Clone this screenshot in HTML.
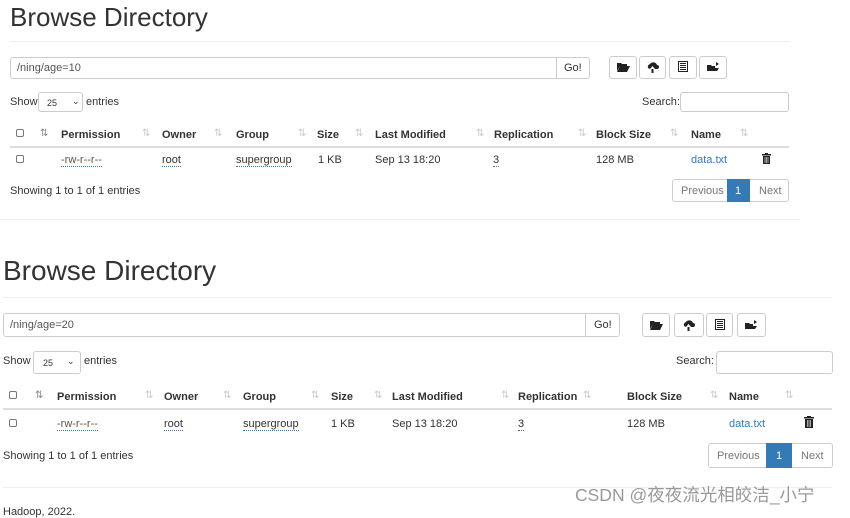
<!DOCTYPE html>
<html><head><meta charset="utf-8"><style>
*{margin:0;padding:0;box-sizing:border-box}
body{width:850px;height:516px;overflow:hidden;background:#fff;font-family:"Liberation Sans",sans-serif;color:#333;position:relative}
.a{position:absolute;white-space:nowrap}
.t{font-size:11px;line-height:12px}
.b{font-weight:bold}
.box{position:absolute;border:1px solid #ccc;border-radius:3px;background:#fff}
.hr{position:absolute;height:1px;background:#eee}
.cb{position:absolute;width:8px;height:8px;border:1px solid #777;border-radius:2px}
.s{color:#ccc;font-size:10px;position:absolute;line-height:12px}
.u{border-bottom:1px dotted #337ab7}
.lk{color:#337ab7}
svg{display:block}
</style></head><body>

<!-- TOP -->
<div class="a" style="left:10px;top:1px;font-size:26px;line-height:32px;color:#333">Browse Directory</div>
<div class="hr" style="left:10px;top:41px;width:780px"></div>
<div class="box" style="left:10px;top:57px;width:547px;height:22px;border-radius:3px 0 0 3px"></div>
<div class="a t" style="left:17px;top:62px;color:#555">/ning/age=10</div>
<div class="box" style="left:556px;top:57px;width:34px;height:22px;border-radius:0 3px 3px 0"></div>
<div class="a t" style="left:564px;top:62px;color:#333">Go!</div>
<div class="box" style="left:609px;top:56px;width:28px;height:23px"></div>
<div class="box" style="left:639px;top:56px;width:27px;height:23px"></div>
<div class="box" style="left:669px;top:56px;width:28px;height:23px"></div>
<div class="box" style="left:699px;top:56px;width:28px;height:23px"></div>
<svg class="a" style="left:617px;top:62px" width="13" height="10"><path d="M0 1h4l1 1h5v2H3L0 9z M3 4h10l-3 6H0z" fill="#222"/></svg>
<svg class="a" style="left:646px;top:61px" width="13" height="12"><path d="M2 7a3 3 0 0 1 2-4a4 4 0 0 1 7 1a2 2 0 0 1 0 4H9L6.5 5L4 8z M5.5 8h2v4h-2z" fill="#222"/></svg>
<svg class="a" style="left:678px;top:61px" width="10" height="11"><rect x="0.5" y="0.5" width="9" height="10" fill="none" stroke="#222"/><path d="M2 2.5h6M2 4.5h6M2 6.5h6M2 8.5h6" stroke="#222"/></svg>
<svg class="a" style="left:707px;top:62px" width="13" height="10"><path d="M0 3h4l1 1h3v2H3L0 9z M3 6h9l-2 3H0z M9 0l3 2-3 2z" fill="#222"/></svg>

<div class="a t" style="left:10px;top:96px">Show</div>
<div class="box" style="left:38px;top:92px;width:45px;height:20px"></div>
<div class="a" style="left:47px;top:98px;font-size:9px">25</div>
<div class="a" style="left:72px;top:96px;font-size:9px">⌄</div>
<div class="a t" style="left:86px;top:96px">entries</div>
<div class="a t" style="left:642px;top:96px">Search:</div>
<div class="box" style="left:680px;top:92px;width:109px;height:20px"></div>

<div class="cb" style="left:16px;top:129px"></div>
<div class="s" style="left:40px;top:128px;color:#888">⇅</div>
<div class="a t b" style="left:61px;top:129px">Permission</div><div class="s" style="left:142px;top:128px">⇅</div>
<div class="a t b" style="left:162px;top:129px">Owner</div><div class="s" style="left:214px;top:128px">⇅</div>
<div class="a t b" style="left:236px;top:129px">Group</div><div class="s" style="left:298px;top:128px">⇅</div>
<div class="a t b" style="left:317px;top:129px">Size</div><div class="s" style="left:355px;top:128px">⇅</div>
<div class="a t b" style="left:375px;top:129px">Last Modified</div><div class="s" style="left:476px;top:128px">⇅</div>
<div class="a t b" style="left:494px;top:129px">Replication</div><div class="s" style="left:578px;top:128px">⇅</div>
<div class="a t b" style="left:596px;top:129px">Block Size</div><div class="s" style="left:670px;top:128px">⇅</div>
<div class="a t b" style="left:691px;top:129px">Name</div><div class="s" style="left:740px;top:128px">⇅</div>
<div class="a" style="left:10px;top:146px;width:779px;height:2px;background:#ddd"></div>
<div class="cb" style="left:16px;top:155px"></div>
<div class="a t u" style="left:61px;top:154px;color:#555">-rw-r--r--</div>
<div class="a t u" style="left:162px;top:154px">root</div>
<div class="a t u" style="left:236px;top:154px">supergroup</div>
<div class="a t" style="left:318px;top:154px">1 KB</div>
<div class="a t" style="left:375px;top:154px">Sep 13 18:20</div>
<div class="a t u" style="left:493px;top:154px">3</div>
<div class="a t" style="left:596px;top:154px">128 MB</div>
<div class="a t lk" style="left:691px;top:154px">data.txt</div>
<svg class="a" style="left:762px;top:153px" width="9" height="11"><path d="M0 1h9v1.5H0z M3 0h3v1H3z M1 3h7v8H1z" fill="#222"/><path d="M3 4v6M4.5 4v6M6 4v6" stroke="#fff" stroke-width=".6"/></svg>
<div class="a t" style="left:10px;top:185px">Showing 1 to 1 of 1 entries</div>
<div class="box" style="left:672px;top:179px;width:117px;height:23px"></div>
<div class="a" style="left:727px;top:179px;width:23px;height:23px;background:#337ab7"></div>
<div class="a t" style="left:681px;top:185px;color:#777">Previous</div>
<div class="a t" style="left:735px;top:185px;color:#fff">1</div>
<div class="a t" style="left:759px;top:185px;color:#777">Next</div>
<div class="hr" style="left:0;top:219px;width:800px"></div>

<!-- BOTTOM -->
<div class="a" style="left:3px;top:254px;font-size:28px;line-height:34px">Browse Directory</div>
<div class="hr" style="left:3px;top:297px;width:829px"></div>
<div class="box" style="left:3px;top:313px;width:583px;height:24px;border-radius:3px 0 0 3px"></div>
<div class="a t" style="left:10px;top:319px;color:#555">/ning/age=20</div>
<div class="box" style="left:585px;top:313px;width:35px;height:24px;border-radius:0 3px 3px 0"></div>
<div class="a t" style="left:594px;top:319px">Go!</div>
<div class="box" style="left:642px;top:313px;width:28px;height:24px"></div>
<div class="box" style="left:674px;top:313px;width:30px;height:24px"></div>
<div class="box" style="left:706px;top:313px;width:27px;height:24px"></div>
<div class="box" style="left:737px;top:313px;width:29px;height:24px"></div>
<svg class="a" style="left:650px;top:320px" width="13" height="10"><path d="M0 1h4l1 1h5v2H3L0 9z M3 4h10l-3 6H0z" fill="#222"/></svg>
<svg class="a" style="left:682px;top:319px" width="13" height="12"><path d="M2 7a3 3 0 0 1 2-4a4 4 0 0 1 7 1a2 2 0 0 1 0 4H9L6.5 5L4 8z M5.5 8h2v4h-2z" fill="#222"/></svg>
<svg class="a" style="left:715px;top:319px" width="10" height="11"><rect x="0.5" y="0.5" width="9" height="10" fill="none" stroke="#222"/><path d="M2 2.5h6M2 4.5h6M2 6.5h6M2 8.5h6" stroke="#222"/></svg>
<svg class="a" style="left:745px;top:320px" width="13" height="10"><path d="M0 3h4l1 1h3v2H3L0 9z M3 6h9l-2 3H0z M9 0l3 2-3 2z" fill="#222"/></svg>

<div class="a t" style="left:3px;top:355px">Show</div>
<div class="box" style="left:33px;top:351px;width:48px;height:23px"></div>
<div class="a" style="left:43px;top:358px;font-size:9px">25</div>
<div class="a" style="left:67px;top:356px;font-size:9px">⌄</div>
<div class="a t" style="left:84px;top:355px">entries</div>
<div class="a t" style="left:676px;top:355px">Search:</div>
<div class="box" style="left:716px;top:351px;width:117px;height:23px"></div>

<div class="cb" style="left:9px;top:391px"></div>
<div class="s" style="left:35px;top:390px;color:#888">⇅</div>
<div class="a t b" style="left:57px;top:391px">Permission</div><div class="s" style="left:145px;top:390px">⇅</div>
<div class="a t b" style="left:164px;top:391px">Owner</div><div class="s" style="left:223px;top:390px">⇅</div>
<div class="a t b" style="left:243px;top:391px">Group</div><div class="s" style="left:311px;top:390px">⇅</div>
<div class="a t b" style="left:331px;top:391px">Size</div><div class="s" style="left:374px;top:390px">⇅</div>
<div class="a t b" style="left:392px;top:391px">Last Modified</div><div class="s" style="left:501px;top:390px">⇅</div>
<div class="a t b" style="left:518px;top:391px">Replication</div><div class="s" style="left:583px;top:390px">⇅</div>
<div class="a t b" style="left:627px;top:391px">Block Size</div><div class="s" style="left:710px;top:390px">⇅</div>
<div class="a t b" style="left:729px;top:391px">Name</div><div class="s" style="left:785px;top:390px">⇅</div>
<div class="a" style="left:3px;top:408px;width:829px;height:2px;background:#ddd"></div>
<div class="cb" style="left:9px;top:419px"></div>
<div class="a t u" style="left:57px;top:418px;color:#555">-rw-r--r--</div>
<div class="a t u" style="left:164px;top:418px">root</div>
<div class="a t u" style="left:243px;top:418px">supergroup</div>
<div class="a t" style="left:331px;top:418px">1 KB</div>
<div class="a t" style="left:392px;top:418px">Sep 13 18:20</div>
<div class="a t u" style="left:518px;top:418px">3</div>
<div class="a t" style="left:627px;top:418px">128 MB</div>
<div class="a t lk" style="left:729px;top:418px">data.txt</div>
<svg class="a" style="left:804px;top:416px" width="10" height="12"><path d="M0 1h10v1.5H0z M3 0h4v1H3z M1 3h8v9H1z" fill="#222"/><path d="M3.3 4v7M5 4v7M6.7 4v7" stroke="#fff" stroke-width=".6"/></svg>
<div class="a t" style="left:3px;top:450px">Showing 1 to 1 of 1 entries</div>
<div class="box" style="left:708px;top:443px;width:125px;height:25px"></div>
<div class="a" style="left:766px;top:443px;width:26px;height:25px;background:#337ab7"></div>
<div class="a t" style="left:717px;top:450px;color:#777">Previous</div>
<div class="a t" style="left:776px;top:450px;color:#fff">1</div>
<div class="a t" style="left:801px;top:450px;color:#777">Next</div>
<div class="hr" style="left:3px;top:487px;width:829px"></div>
<div class="a" style="left:3px;top:506px;font-size:11px;color:#333">Hadoop, 2022.</div>
<div class="a" style="left:575px;top:484px;font-size:17.5px;line-height:22px;color:#999;font-family:'Liberation Sans','Noto Sans CJK SC',sans-serif">CSDN @夜夜流光相皎洁_小宁</div>
</body></html>
